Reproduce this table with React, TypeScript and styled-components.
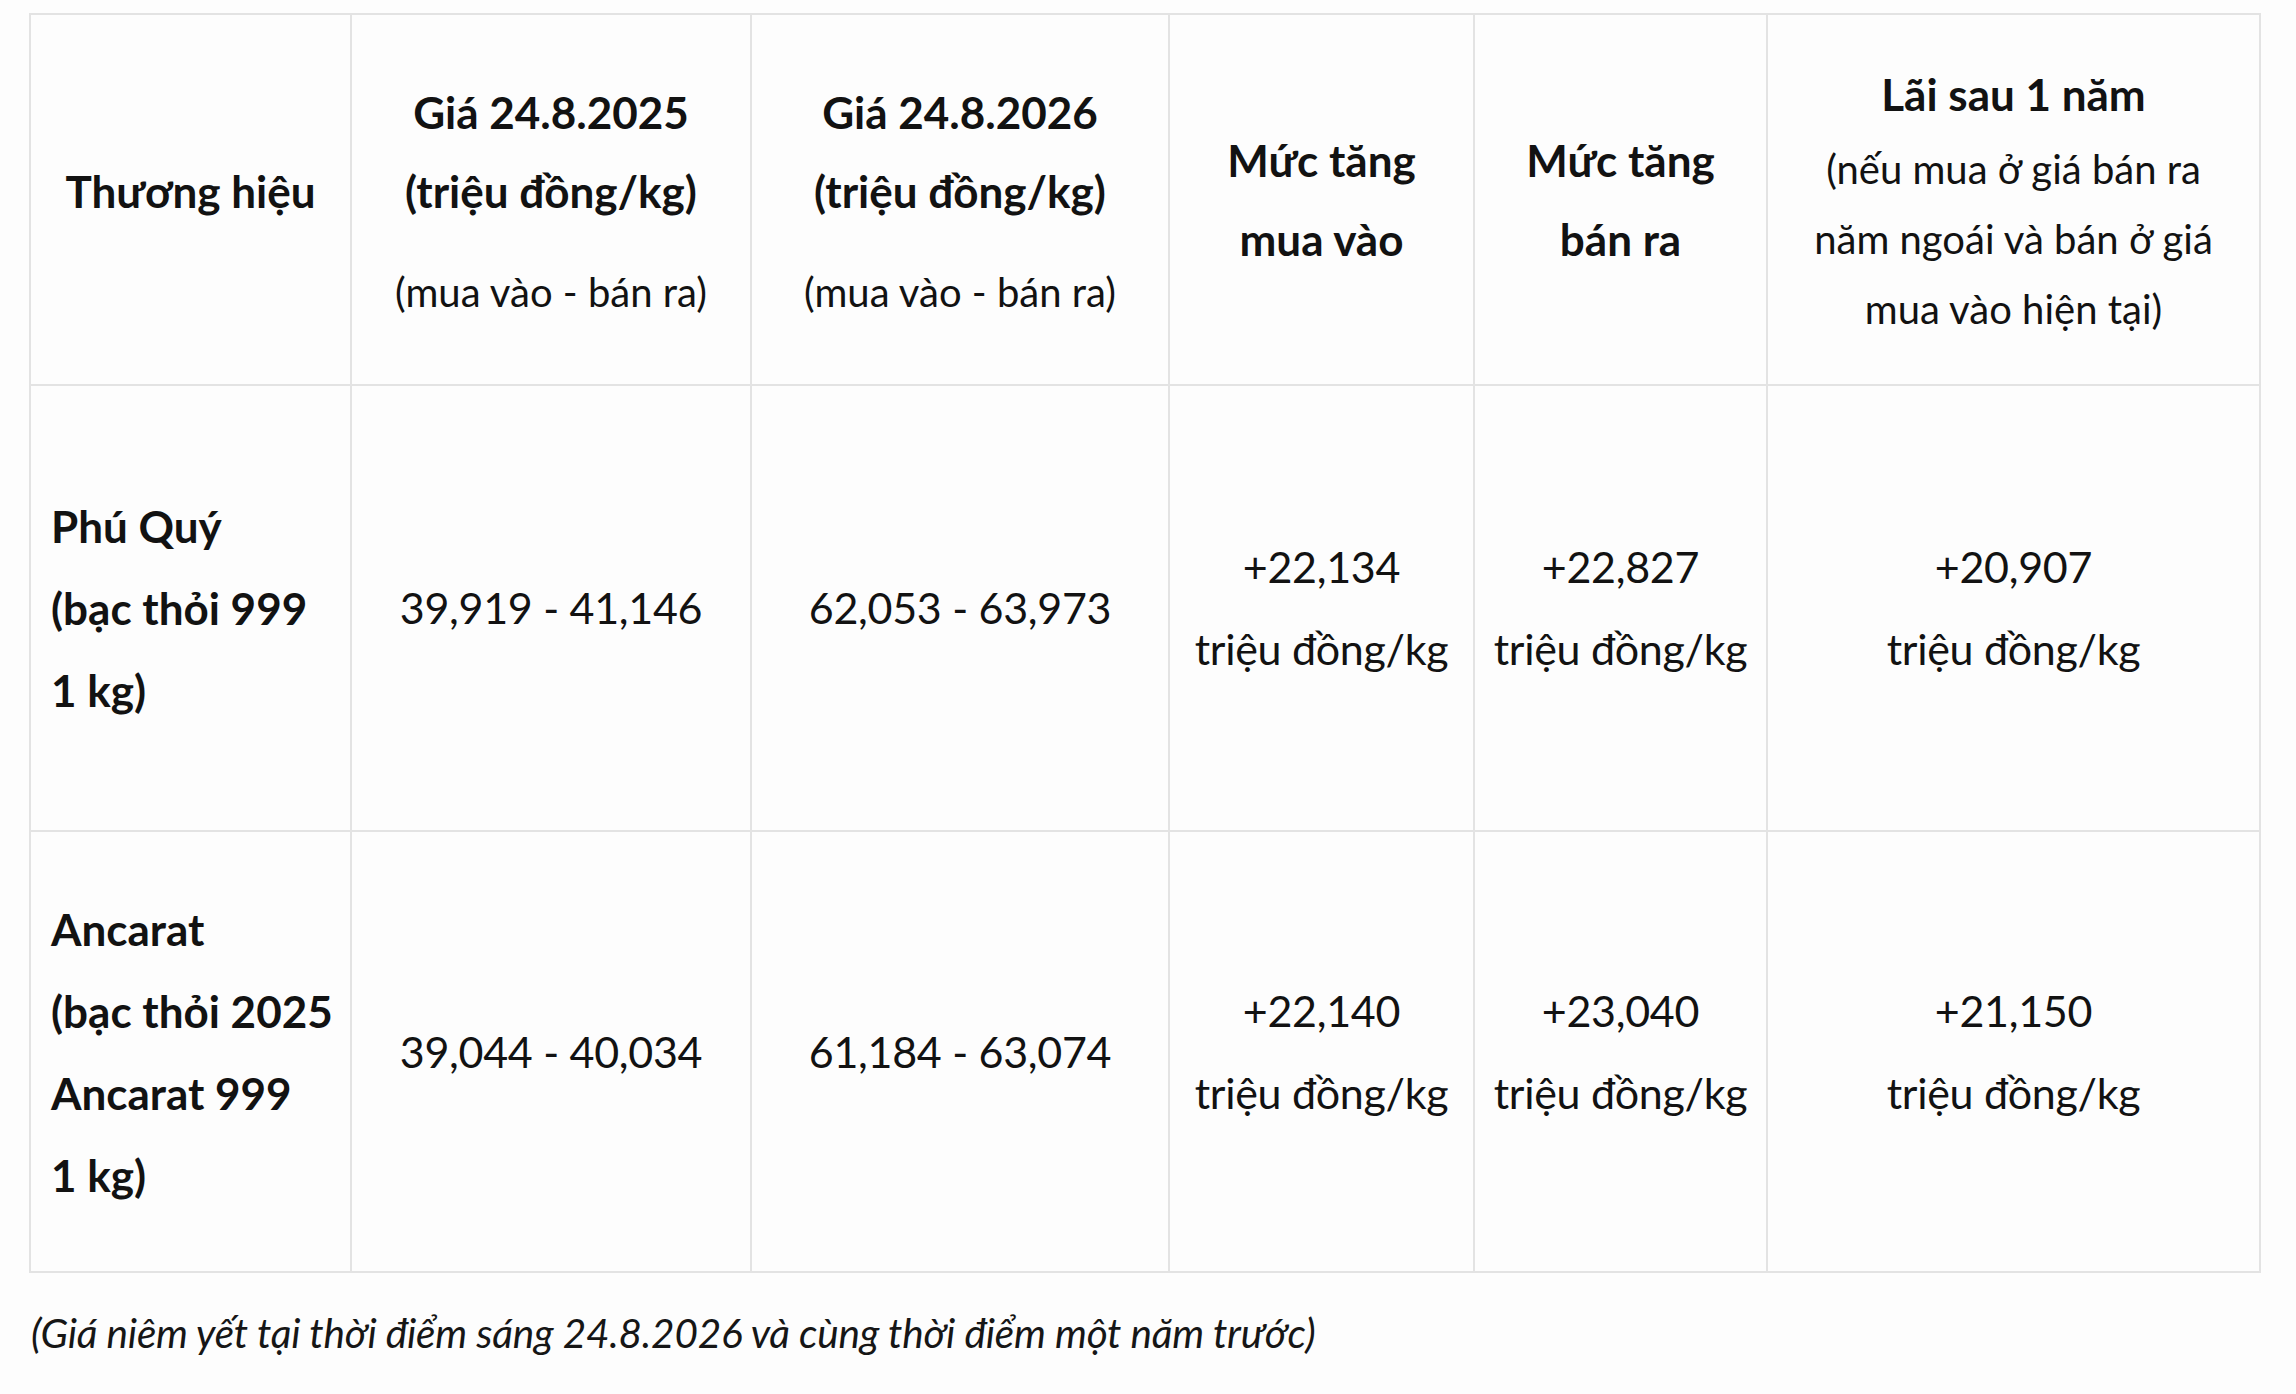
import React from "react";
import styled, { createGlobalStyle } from "styled-components";

const GlobalStyle = createGlobalStyle`
  html, body {
    margin: 0;
    padding: 0;
    background: #fdfdfd;
  }
  body {
    font-family: Lato, "Open Sans", "Noto Sans", sans-serif;
    color: #121212;
  }
`;

const Page = styled.div`
  padding: 13px 0 0 29px;
  width: 2296px;
  height: 1394px;
  box-sizing: border-box;
`;

const Table = styled.div`
  display: grid;
  grid-template-columns: 321px 400px 418px 305px 293px 493px;
  grid-template-rows: 371px 446px 441px;
  width: max-content;
  border-top: 2px solid #e3e3e3;
  border-left: 2px solid #e3e3e3;
`;

const Cell = styled.div<{ $align?: "left" | "center"; $lift?: number }>`
  border-right: 2px solid #e3e3e3;
  border-bottom: 2px solid #e3e3e3;
  display: flex;
  flex-direction: column;
  justify-content: center;
  align-items: ${(p) => (p.$align === "left" ? "flex-start" : "center")};
  text-align: ${(p) => (p.$align === "left" ? "left" : "center")};
  padding: ${(p) => (p.$align === "left" ? "0 0 0 20px" : "0")};
  padding-bottom: ${(p) => p.$lift ?? 0}px;
  box-sizing: border-box;
  min-width: 0;
`;

const HeadTitle = styled.div`
  font-weight: 700;
  font-size: 44px;
  line-height: 79px;
  white-space: nowrap;
  letter-spacing: 0;
`;

const HeadSub = styled.div<{ $gap?: number }>`
  font-weight: 400;
  font-size: 40px;
  line-height: 70px;
  white-space: nowrap;
  margin-top: ${(p) => p.$gap ?? 0}px;
  letter-spacing: 0;
`;

const Brand = styled.div`
  font-weight: 700;
  font-size: 44px;
  line-height: 82px;
  white-space: nowrap;
  letter-spacing: 0;
`;

const Value = styled.div`
  font-weight: 400;
  font-size: 43px;
  line-height: 82px;
  white-space: nowrap;
  letter-spacing: -0.3px;
`;

const Caption = styled.p`
  margin: 35px 0 0 2px;
  font-style: italic;
  font-size: 40.5px;
  line-height: 50px;
  color: #161616;
  letter-spacing: -0.2px;
  white-space: nowrap;
`;

const lines = (arr: string[]) =>
  arr.map((l, i) => (
    <React.Fragment key={i}>
      {l}
      {i < arr.length - 1 && <br />}
    </React.Fragment>
  ));

type Row = {
  brand: string[];
  p2025: string;
  p2026: string;
  buy: string;
  sell: string;
  profit: string;
};

const rows: Row[] = [
  {
    brand: ["Phú Quý", "(bạc thỏi 999", "1 kg)"],
    p2025: "39,919 - 41,146",
    p2026: "62,053 - 63,973",
    buy: "+22,134",
    sell: "+22,827",
    profit: "+20,907",
  },
  {
    brand: ["Ancarat", "(bạc thỏi 2025", "Ancarat 999", "1 kg)"],
    p2025: "39,044 - 40,034",
    p2026: "61,184 - 63,074",
    buy: "+22,140",
    sell: "+23,040",
    profit: "+21,150",
  },
];

const unit = "triệu đồng/kg";

export default function App() {
  return (
    <Page>
      <GlobalStyle />
      <Table>
        <Cell $lift={16}>
          <HeadTitle>Thương hiệu</HeadTitle>
        </Cell>
        <Cell>
          <HeadTitle>{lines(["Giá 24.8.2025", "(triệu đồng/kg)"])}</HeadTitle>
          <HeadSub $gap={26}>(mua vào - bán ra)</HeadSub>
        </Cell>
        <Cell>
          <HeadTitle>{lines(["Giá 24.8.2026", "(triệu đồng/kg)"])}</HeadTitle>
          <HeadSub $gap={26}>(mua vào - bán ra)</HeadSub>
        </Cell>
        <Cell>
          <HeadTitle>{lines(["Mức tăng", "mua vào"])}</HeadTitle>
        </Cell>
        <Cell>
          <HeadTitle>{lines(["Mức tăng", "bán ra"])}</HeadTitle>
        </Cell>
        <Cell>
          <HeadTitle>Lãi sau 1 năm</HeadTitle>
          <HeadSub>
            {lines([
              "(nếu mua ở giá bán ra",
              "năm ngoái và bán ở giá",
              "mua vào hiện tại)",
            ])}
          </HeadSub>
        </Cell>

        {rows.map((r, i) => (
          <React.Fragment key={i}>
            <Cell $align="left">
              <Brand>{lines(r.brand)}</Brand>
            </Cell>
            <Cell>
              <Value>{r.p2025}</Value>
            </Cell>
            <Cell>
              <Value>{r.p2026}</Value>
            </Cell>
            <Cell>
              <Value>{lines([r.buy, unit])}</Value>
            </Cell>
            <Cell>
              <Value>{lines([r.sell, unit])}</Value>
            </Cell>
            <Cell>
              <Value>{lines([r.profit, unit])}</Value>
            </Cell>
          </React.Fragment>
        ))}
      </Table>
      <Caption>
        (Giá niêm yết tại thời điểm sáng 24.8.2026 và cùng thời điểm một năm trước)
      </Caption>
    </Page>
  );
}
